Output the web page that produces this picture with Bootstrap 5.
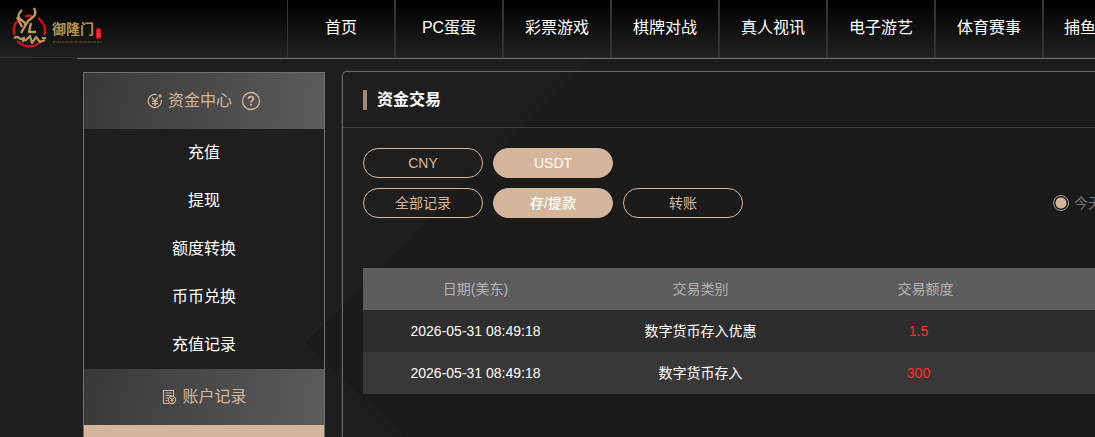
<!DOCTYPE html>
<html lang="zh-CN">
<head>
<meta charset="utf-8">
<meta name="viewport" content="width=device-width, initial-scale=1">
<title>资金交易</title>
<link href="https://cdn.jsdelivr.net/npm/bootstrap@5.3.0/dist/css/bootstrap.min.css" rel="stylesheet">
<style>
  :root { --gold: #d3b69c; --edge: #707070; }
  body {
    font-family: "Liberation Sans", "Noto Sans CJK SC", sans-serif;
    font-size: 14px;
    color: #fff;
    background: #1f1f1f url("data:image/svg+xml,%3Csvg xmlns='http://www.w3.org/2000/svg' width='1920' height='1080'%3E%3Cpath fill='%231e1e1e' d='M0 400L37 437H0zM25 58L305 338 588 58z'/%3E%3Cpath fill='%231b1b1b' d='M590 58H1920V1080H1043L276 372z'/%3E%3Cpath fill='%231e1e1e' d='M305 342L276 372 340 437H403z'/%3E%3C/svg%3E") no-repeat;
  }
  a { color: inherit; text-decoration: none; }
  .top-bar { height: 58px; background: linear-gradient(#000, #212121); border-bottom: 1px solid #2e2e2e; }
  .brand-box { width: 287px; padding: 7px 0 0 12px; }
  .brand-name { color: #b3924f; font-size: 14px; font-weight: 700; line-height: 20px; }
  .main-menu a {
    width: 108px; height: 58px; line-height: 56px; font-size: 16px;
    border: solid #333; border-width: 0 1px;
  }
  .main-menu .cut-item { text-align: left; padding-left: 20px; }
  .page-area { margin-left: 77px; border-top: 1px solid var(--edge); min-height: 0; }
  .side-menu { width: 242px; margin: 13px 17px 0 6px; border: 1px solid var(--edge); border-bottom: 0; font-size: 16px; }
  .side-menu h2 {
    height: 56px; gap: 5px; font-size: 16px; font-weight: 400;
    color: var(--gold); background: linear-gradient(100deg, #383838, #5c5c5c);
  }
  .side-menu a { height: 48px; line-height: 48px; }
  .side-menu .current { background: var(--gold); }
  .panel { margin-top: 12px; border: 1px solid #666; border-width: 1px 0 0 1px; border-radius: 5px 0 0 0; box-shadow: 0 0 2px #555; min-width: 0; }
  .panel-title { height: 56px; padding-left: 20px; gap: 10px; border-bottom: 1px solid #3d3d3d; }
  .panel-title h1 { font-size: 16px; font-weight: 700; }
  .title-bar { width: 4px; height: 20px; background: #a08b79; }
  .panel-body { padding: 20px 0 0 20px; }
  .pill-row { gap: 10px; margin-bottom: 10px; }
  .pill {
    width: 120px; height: 30px; border: 1px solid var(--gold); border-radius: 15px;
    color: var(--gold); background: transparent; font-size: 14px; line-height: 28px; padding: 0;
  }
  .pill.on { background: var(--gold); color: #fff; font-weight: 500; }
  .day-choice { width: 42px; gap: 5px; color: #777; white-space: nowrap; }
  .day-choice input {
    appearance: none; flex: none; width: 16px; height: 16px; margin: 0; border: 1px solid #a0a0a0;
    border-radius: 50%; background: radial-gradient(circle, var(--gold) 5px, transparent 6px);
  }
  .records { margin-top: 50px; table-layout: fixed; text-align: center; }
  .records th, .records td { height: 42px; padding: 0; }
  .records th { font-weight: 400; color: #b3b3b3; background: #5c5c5c; }
  .records .field { width: 225px; }
  .records td { background: #2d2d2d; }
  .records tr:nth-child(even) td { background: #383838; }
  .records td.amount { color: #ff2d2d; padding-right: 14px; }
</style>
</head>
<body class="vh-100 overflow-hidden d-flex flex-column">

<header class="top-bar d-flex flex-shrink-0 overflow-hidden">
  <a href="#" class="brand-box d-flex flex-shrink-0">
    <svg width="36" height="42" viewBox="0 0 36 42" fill="none" aria-hidden="true">
      <path d="M5 14A15.500 15.500 0 0 0 2.500 28M13 9.500Q17 8 20 9M26 11A15.500 15.500 0 0 1 32.500 28M5 34Q17 45 30 34" stroke="#d8101b" stroke-width="2.200"/>
      <g stroke="#b9985a" stroke-linejoin="round">
        <path stroke-width="2.400" d="M10 3Q5 8 7 11L13 16V19M22 1Q25 7 21 10L16 14 9 26M5 10L10 20M19 16L17 25H24"/>
        <path stroke-width="2.200" d="M2 31Q5 29 7 31T12 31L11 35M13 34L18 29 20 36 24 30 28 35 33 33M30 31H34"/>
      </g>
    </svg>
    <span class="d-flex flex-column pt-2">
      <span class="d-flex align-items-end ms-1 mt-1">
        <span class="brand-name">御隆门</span>
        <svg width="7" height="20" viewBox="0 0 7 20" aria-hidden="true">
          <rect x="2" y="9" width="5" height="11" rx="2" fill="#dc111c"/>
          <path d="M3.500 11.500h2M4.500 11.500v2M3.500 14.500h2v3h-2z" stroke="#f69" stroke-width=".7" fill="none"/>
        </svg>
      </span>
      <svg width="52" height="4" viewBox="0 0 52 4" class="ms-1" aria-hidden="true">
        <path d="M1 3H50" stroke="#4a3b22" stroke-width="2" stroke-dasharray="2 .6 1 .8"/>
      </svg>
    </span>
  </a>
  <nav class="main-menu d-flex text-center text-nowrap">
    <a href="#" class="flex-shrink-0">首页</a>
    <a href="#" class="flex-shrink-0">PC蛋蛋</a>
    <a href="#" class="flex-shrink-0">彩票游戏</a>
    <a href="#" class="flex-shrink-0">棋牌对战</a>
    <a href="#" class="flex-shrink-0">真人视讯</a>
    <a href="#" class="flex-shrink-0">电子游艺</a>
    <a href="#" class="flex-shrink-0">体育赛事</a>
    <a href="#" class="flex-shrink-0 cut-item">捕鱼</a>
  </nav>
</header>

<main class="page-area d-flex flex-fill">
  <aside class="side-menu d-flex flex-column flex-shrink-0 text-center">
    <h2 class="d-flex align-items-center justify-content-center flex-shrink-0 m-0">
      <svg width="16" height="16" viewBox="0 0 16 16" fill="none" stroke="currentColor" stroke-width="1.200" aria-hidden="true">
        <path d="M10 1.800A6.600 6.600 0 1 0 14.300 7M5 4.500l3 3.500 3-3.500M5 8.500h6M5 10.700h6M8 8v5M13 1v4M11 3h4"/>
      </svg>
      资金中心
      <svg width="20" height="20" viewBox="0 0 20 20" class="ms-1" fill="none" stroke="currentColor" aria-hidden="true">
        <circle cx="10" cy="10" r="8.500" stroke-width="1.300"/>
        <path stroke-width="1.800" d="M7.500 8Q7.500 5.700 10 5.700T12.500 7.800Q12.500 9 11 9.700 10 10.200 10 11.500M10 12.800v1.800"/>
      </svg>
    </h2>
    <a href="#" class="flex-shrink-0">充值</a>
    <a href="#" class="flex-shrink-0">提现</a>
    <a href="#" class="flex-shrink-0">额度转换</a>
    <a href="#" class="flex-shrink-0">币币兑换</a>
    <a href="#" class="flex-shrink-0">充值记录</a>
    <h2 class="d-flex align-items-center justify-content-center flex-shrink-0 m-0">
      <svg width="16" height="16" viewBox="0 0 16 16" fill="none" stroke="currentColor" stroke-width="1.100" aria-hidden="true">
        <path d="M12.500 7V1.500h-10v13H8M4.500 4h6M4.500 6.500h6M4.500 9h3M4.500 11.500h2"/>
        <circle cx="11" cy="11" r="3.600"/>
        <path d="M9.500 9l1.500 1.800L12.500 9M9.500 11.500h3M11 11v2.500"/>
      </svg>
      账户记录
    </h2>
    <div class="current flex-fill"></div>
  </aside>

  <section class="panel flex-fill">
    <div class="panel-title d-flex align-items-center">
      <span class="title-bar"></span>
      <h1 class="m-0">资金交易</h1>
    </div>
    <div class="panel-body">
      <div class="pill-row d-flex">
        <button type="button" class="pill">CNY</button>
        <button type="button" class="pill on">USDT</button>
      </div>
      <div class="pill-row d-flex align-items-center">
        <button type="button" class="pill">全部记录</button>
        <button type="button" class="pill on">存/提款</button>
        <button type="button" class="pill">转账</button>
        <label class="day-choice d-flex align-items-center ms-auto"><input type="radio" name="day" checked>今天</label>
      </div>
      <table class="records w-100">
        <thead>
          <tr><th class="field">日期(美东)</th><th class="field">交易类别</th><th class="field">交易额度</th><th></th></tr>
        </thead>
        <tbody>
          <tr><td>2026-05-31 08:49:18</td><td>数字货币存入优惠</td><td class="amount">1.5</td><td></td></tr>
          <tr><td>2026-05-31 08:49:18</td><td>数字货币存入</td><td class="amount">300</td><td></td></tr>
        </tbody>
      </table>
    </div>
  </section>
</main>

<script src="https://cdn.jsdelivr.net/npm/bootstrap@5.3.0/dist/js/bootstrap.bundle.min.js"></script>
</body>
</html>
